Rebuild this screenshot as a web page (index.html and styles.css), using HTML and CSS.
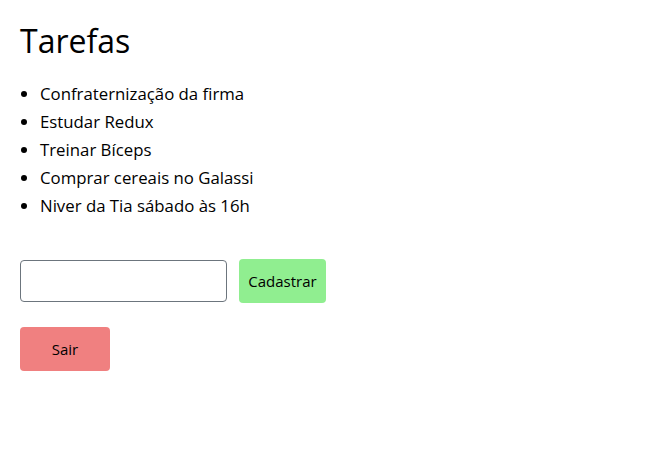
FILE: index.html
```html
<!DOCTYPE html>
<html lang="pt-BR">
<head>
<meta charset="utf-8">
<title>Tarefas</title>
<link rel="stylesheet" href="styles.css">
</head>
<body>
<main class="page">
  <h1 class="title">Tarefas</h1>
  <ul class="tasks">
    <li>Confraternização da firma</li>
    <li>Estudar Redux</li>
    <li>Treinar Bíceps</li>
    <li>Comprar cereais no Galassi</li>
    <li>Niver da Tia sábado às 16h</li>
  </ul>
  <form class="add-form">
    <input class="task-input" type="text">
    <button class="btn btn-add" type="button">Cadastrar</button>
  </form>
  <button class="btn btn-exit" type="button">Sair</button>
</main>
</body>
</html>
```
FILE: styles.css
```css
* { box-sizing: border-box; }
body {
  margin: 0;
  font-family: "Open Sans", "Noto Sans", sans-serif;
  color: #000;
  background: #fff;
}
.page {
  padding: 20px;
}
.title {
  margin: 0 0 18px 0;
  font-size: 32px;
  font-weight: 400;
  line-height: 42px;
}
.tasks {
  margin: 0;
  padding-left: 20px;
  font-size: 16.8px;
  line-height: 28px;
}
.add-form {
  display: flex;
  align-items: center;
  gap: 12px;
  margin-top: 39px;
}
.task-input {
  width: 207px;
  height: 42px;
  border: 1px solid #6c757d;
  border-radius: 4px;
  font: inherit;
  padding: 6px 12px;
}
.btn {
  border: none;
  border-radius: 4px;
  font-family: inherit;
  font-size: 15px;
  color: #000;
  height: 44px;
  padding: 0 8px;
}
.btn-add {
  background: #90ee90;
  width: 87px;
}
.btn-exit {
  margin-top: 24px;
  background: #f08080;
  width: 90px;
}
```
